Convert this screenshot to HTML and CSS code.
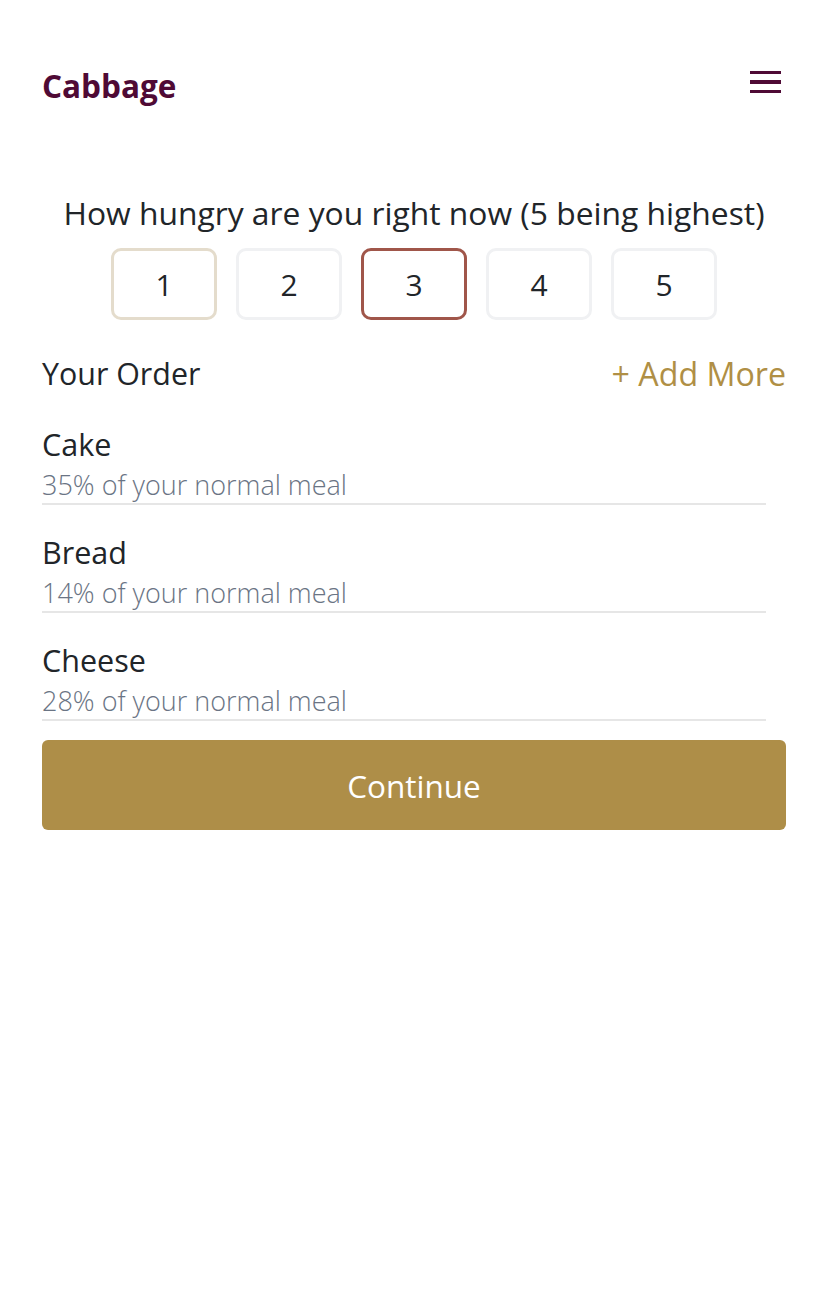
FILE: index.html
```html
<!DOCTYPE html>
<html>
<head>
<meta charset="utf-8">
<link rel="stylesheet" href="styles.css">
</head>
<body>
<div class="page">
  <header class="topbar">
    <div class="brand">Cabbage</div>
    <button class="menu" aria-label="menu">
      <span class="bar"></span>
      <span class="bar"></span>
      <span class="bar"></span>
    </button>
  </header>

  <section class="hunger">
    <h2 class="question">How hungry are you right now (5 being highest)</h2>
    <div class="scale">
      <div class="opt opt-low">1</div>
      <div class="opt">2</div>
      <div class="opt opt-sel">3</div>
      <div class="opt">4</div>
      <div class="opt">5</div>
    </div>
  </section>

  <section class="order">
    <div class="order-head">
      <span class="order-title">Your Order</span>
      <span class="add-more">+ Add More</span>
    </div>
    <div class="item">
      <div class="item-name">Cake</div>
      <div class="item-sub">35% of your normal meal</div>
    </div>
    <div class="item">
      <div class="item-name">Bread</div>
      <div class="item-sub">14% of your normal meal</div>
    </div>
    <div class="item">
      <div class="item-name">Cheese</div>
      <div class="item-sub">28% of your normal meal</div>
    </div>
    <button class="continue">Continue</button>
  </section>
</div>
</body>
</html>
```

FILE: styles.css
```css
* { box-sizing: border-box; }
html, body { margin: 0; padding: 0; background: #fff; }
body {
  font-family: "Open Sans", "Noto Sans", sans-serif;
  color: #212529;
}
.page {
  padding: 0 42px;
}
.topbar {
  display: flex;
  justify-content: space-between;
  align-items: center;
  height: 170px;
}
.brand {
  font-size: 31.5px;
  font-weight: 700;
  color: #4f0a35;
}
.menu {
  border: none;
  background: none;
  padding: 0;
  margin-right: 5px;
  margin-top: -6px;
  display: flex;
  flex-direction: column;
  gap: 6px;
  width: 31px;
}
.bar {
  display: block;
  width: 31px;
  height: 3.3px;
  background: #4f0a35;
}
.hunger {
  display: flex;
  flex-direction: column;
  align-items: center;
  margin-top: 23px;
}
.question {
  margin: 0;
  font-size: 31.8px;
  font-weight: 400;
  line-height: 40px;
}
.scale {
  display: flex;
  gap: 19px;
  margin-top: 15px;
}
.opt {
  width: 106px;
  height: 72px;
  border: 3px solid #f0f1f3;
  border-radius: 10px;
  display: flex;
  align-items: center;
  justify-content: center;
  font-size: 30px;
}
.opt-low { border-color: #e4dccc; }
.opt-sel { border-color: #a0564a; }
.order { margin-top: 18px; }
.order-head {
  display: flex;
  justify-content: space-between;
  align-items: center;
  height: 70px;
  font-size: 30.4px;
  margin-bottom: 13px;
}
.add-more { color: #b08f45; font-size: 32.2px; }
.item {
  margin-right: 20px;
  border-bottom: 2px solid #e6e6e6;
  margin-bottom: 24px;
}
.item-name {
  font-size: 30.5px;
  line-height: 46px;
}
.item-sub {
  font-size: 27px;
  font-weight: 300;
  color: #6a7484;
  line-height: 36px;
}
.item:last-of-type { margin-bottom: 19px; }
.continue {
  display: block;
  width: 100%;
  height: 90px;
  border: none;
  border-radius: 6px;
  background: #ae8e48;
  color: #fff;
  font-family: inherit;
  font-size: 31.5px;
}
```
